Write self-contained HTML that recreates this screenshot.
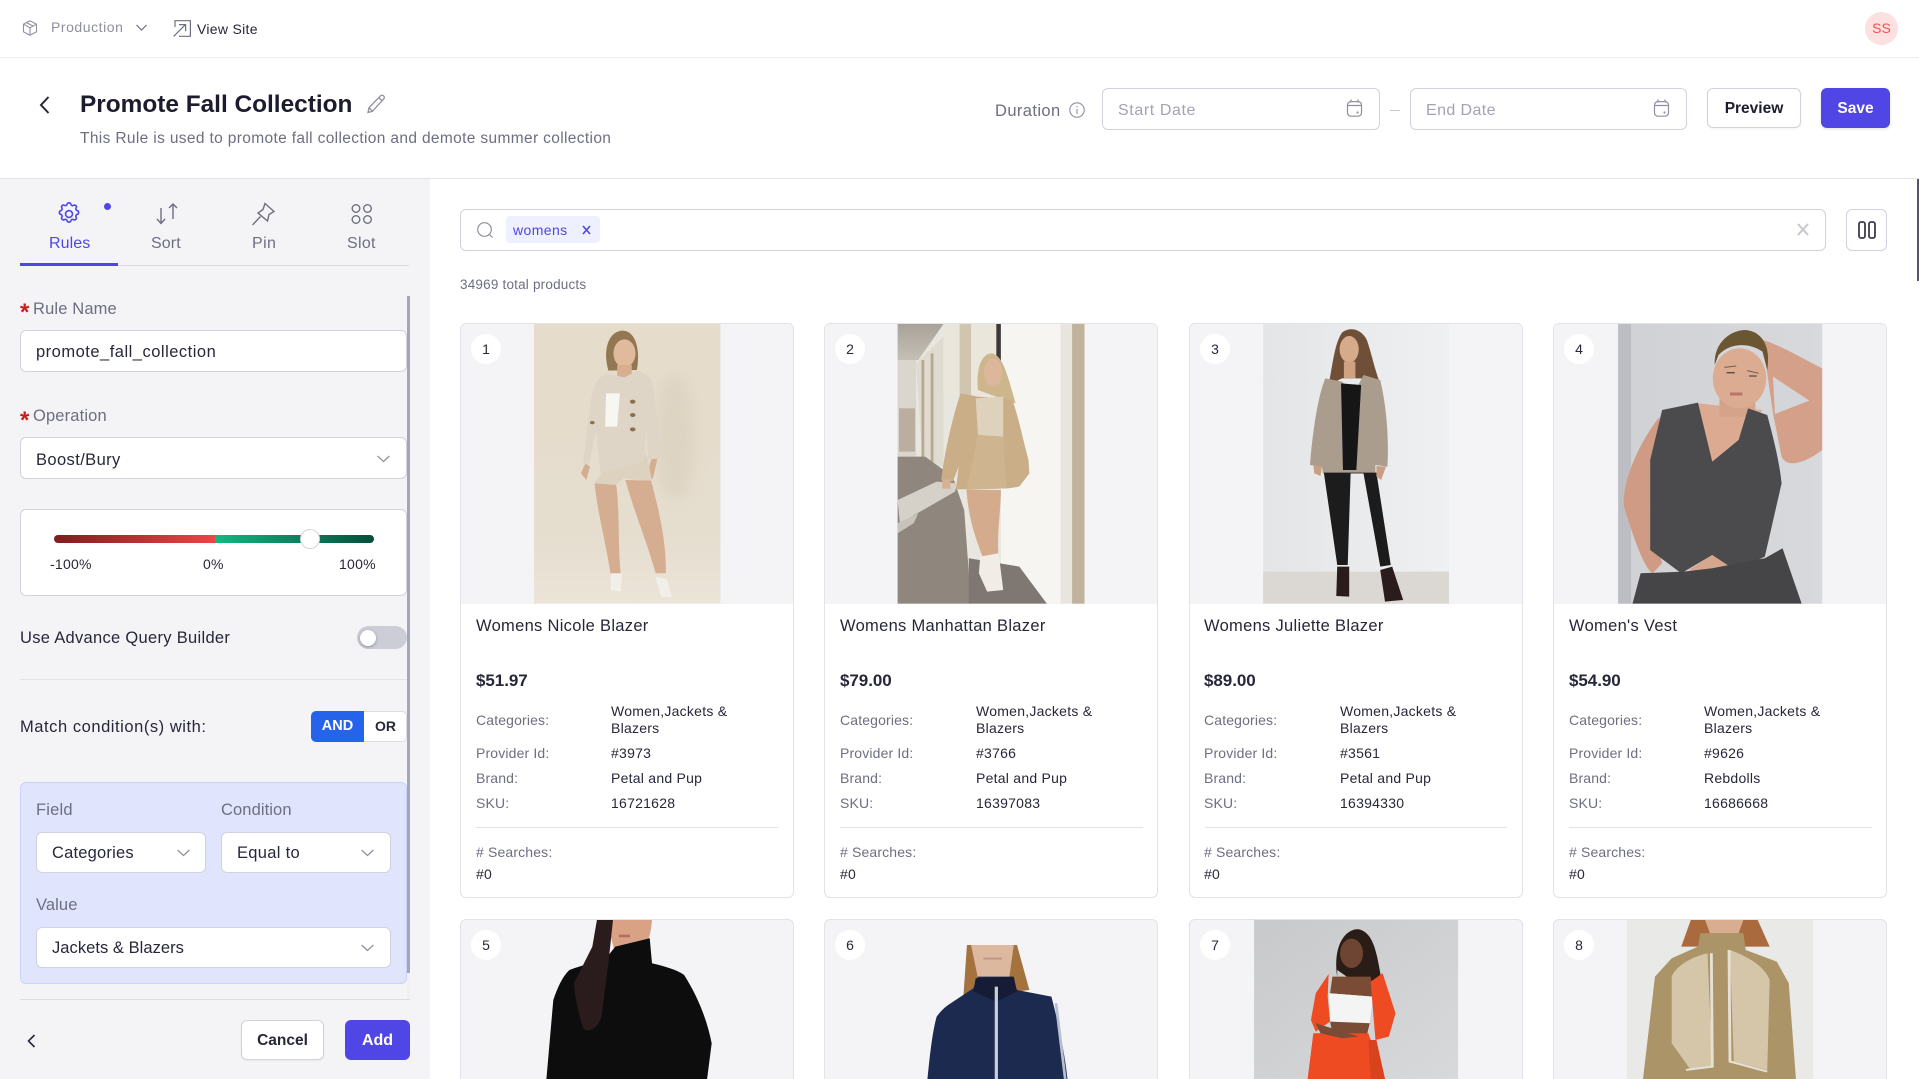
<!DOCTYPE html>
<html lang="en"><head><meta charset="utf-8"><title>Promote Fall Collection</title>
<style>
*{box-sizing:border-box}
html,body{margin:0;padding:0;width:1919px;height:1079px;overflow:hidden;background:#fff}
body{position:relative;font-family:"Liberation Sans","Noto Sans CJK SC",sans-serif;color:#27273a;font-size:16px}
.a{position:absolute}
.t{position:absolute;white-space:nowrap;line-height:20px;height:20px;margin-top:1px}
.l{color:#6e6e82}
.box{position:absolute;background:#fff;border:1px solid #d2d2de;border-radius:6px}
.card{position:absolute;top:323px;width:334px;height:575px;background:#fff;border:1px solid #e2e2e9;border-radius:6px}
.card2{position:absolute;top:919px;width:334px;height:200px;background:#f4f4f7;border:1px solid #e2e2e9;border-radius:6px}
.img{position:absolute;left:0;top:0;width:332px;height:280px;background:#f4f4f7;border-radius:5px 5px 0 0}
.badge{position:absolute;width:30px;height:30px;border-radius:50%;background:#fff;text-align:center;line-height:30px;font-size:14px;color:#27273a;z-index:5}
.s14{font-size:14px;letter-spacing:.25px;margin-top:0}
.s14.l{letter-spacing:.15px}
.m{font-size:16.5px;letter-spacing:.3px}
.p{font-size:17px;font-weight:700;letter-spacing:-.05px}
svg{position:absolute;overflow:visible}
.hr{position:absolute;height:1px;background:#e2e2e8}
</style></head><body>

<div class="hr" style="left:0;top:57px;width:1919px;background:#ececf1"></div>
<svg style="left:22px;top:20px" width="16" height="16" viewBox="0 0 16 16" fill="none" stroke="#8f8f9f" stroke-width="1.1"><path d="M8 .8l6.5 3.4v7.6L8 15.2 1.5 11.8V4.2zM1.5 4.2L8 7.8l6.5-3.6M8 7.8v7.4M4.6 2.6l6.6 3.6"/></svg>
<div class="t s14" style="left:51px;top:17px;color:#8f8f9f;letter-spacing:.55px">Production</div>
<svg style="left:136px;top:24px" width="11" height="8" fill="none" stroke="#6e6e82" stroke-width="1.2"><path d="M.5 1l5 5 5-5"/></svg>
<svg style="left:173px;top:20px" width="18" height="17" fill="none" stroke="#6e6e82" stroke-width="1.2"><path d="M2 7V.7h15.4v15.6H6M.6 16.4L12.5 4.6M6 4.6h6.6v6.6"/></svg>
<div class="t s14" style="left:197px;top:19px;color:#27273a;letter-spacing:.3px">View Site</div>
<div class="a" style="left:1865px;top:12px;width:33px;height:33px;border-radius:50%;background:#fde0e0;color:#ef5350;font-size:14px;text-align:center;line-height:33px">SS</div>

<svg style="left:39px;top:96px" width="11" height="18" fill="none" stroke="#27273a" stroke-width="2"><path d="M9.5 1L2 9l7.5 8"/></svg>
<div class="t" style="left:80px;top:94px;font-size:24.4px;font-weight:700;color:#1c1c2e">Promote Fall Collection</div>
<svg style="left:366px;top:94px" width="20" height="20" viewBox="0 0 20 20" fill="none" stroke="#8f8f9f" stroke-width="1.3"><path d="M2 18.5l1-4.8L14.5 1.800c1-.9 2.600-.7 3.300.3.7 1 .6 2.200-.2 3L6.400 17.300zM3 13.700l3.400 3.600M12.800 3.600l3.400 3.400"/></svg>
<div class="t" style="left:80px;top:128px;font-size:15.5px;color:#6e6e82;letter-spacing:.35px">This Rule is used to promote fall collection and demote summer collection</div>

<div class="t" style="left:995px;top:100px;color:#6e6e82;font-size:16.5px;letter-spacing:.4px">Duration</div>
<svg style="left:1069px;top:102px" width="16" height="16" fill="none" stroke="#8f8f9f" stroke-width="1.1"><circle cx="8" cy="8" r="7.200"/><path d="M8 7v5M8 4v1.400"/></svg>
<div class="box" style="left:1102px;top:88px;width:278px;height:42px"></div>
<div class="t" style="left:1118px;top:100px;color:#a3a3b3;letter-spacing:.6px">Start Date</div>
<svg style="left:1346px;top:99px" width="17" height="18" fill="none" stroke="#8f8f9f" stroke-width="1.200"><rect x="1.500" y="2.600" width="14" height="14.600" rx="3.400"/><path d="M5 .4v3M12 .4v3M2 6.500h13"/><circle cx="11.500" cy="13.500" r=".5"/></svg>
<div class="a" style="left:1390px;top:110px;width:10px;height:1px;background:#c8c8d4"></div>
<div class="box" style="left:1410px;top:88px;width:277px;height:42px"></div>
<div class="t" style="left:1426px;top:100px;color:#a3a3b3;letter-spacing:.4px">End Date</div>
<svg style="left:1653px;top:99px" width="17" height="18" fill="none" stroke="#8f8f9f" stroke-width="1.200"><rect x="1.500" y="2.600" width="14" height="14.600" rx="3.400"/><path d="M5 .4v3M12 .4v3M2 6.500h13"/><circle cx="11.500" cy="13.500" r=".5"/></svg>
<div class="box" style="left:1707px;top:88px;width:94px;height:40px;text-align:center;line-height:40px;font-weight:700;color:#1c1c2e;font-size:15.5px;box-shadow:0 1px 2px rgba(0,0,0,.05)">Preview</div>
<div class="a" style="left:1821px;top:88px;width:69px;height:40px;background:#4f46e5;border-radius:6px;color:#fff;text-align:center;line-height:42px;font-weight:700;font-size:15.5px;box-shadow:0 1px 3px rgba(0,0,0,.12)">Save</div>
<div class="hr" style="left:0;top:178px;width:1919px;background:#e3e3ea"></div>

<!-- SIDEBAR -->
<div class="a" style="left:0;top:179px;width:430px;height:900px;background:#f4f4f7"></div>
<svg style="left:56px;top:201px" width="26" height="26" viewBox="0 0 24 24" fill="none" stroke="#4f46e5" stroke-width="1.5"><path d="M10.300 2.900c.4-1.600 2.900-1.600 3.400 0a1.700 1.700 0 0 0 2.600 1.100c1.500-.9 3.200.8 2.300 2.300a1.700 1.700 0 0 0 1.100 2.600c1.600.4 1.600 2.900 0 3.400a1.700 1.700 0 0 0-1.100 2.600c.9 1.500-.8 3.200-2.300 2.300a1.700 1.700 0 0 0-2.600 1.100c-.4 1.600-2.900 1.600-3.400 0a1.700 1.700 0 0 0-2.600-1.100c-1.500.9-3.200-.8-2.300-2.300a1.700 1.700 0 0 0-1.100-2.600c-1.600-.4-1.600-2.900 0-3.400a1.700 1.700 0 0 0 1.100-2.600c-.9-1.500.8-3.200 2.300-2.300 1 .6 2.300.1 2.600-1.100z"/><circle cx="12" cy="12" r="3.200"/></svg>
<div class="a" style="left:104px;top:203px;width:7px;height:7px;border-radius:50%;background:#4f46e5"></div>
<div class="t" style="left:49px;top:233px;color:#4f46e5;letter-spacing:.1px">Rules</div>
<svg style="left:156px;top:203px" width="22" height="21" fill="none" stroke="#6e6e82" stroke-width="1.4"><path d="M5 5v15M1 16l4 4.500L9 16M17 16V1M13 5l4-4 4 4"/></svg>
<div class="t" style="left:151px;top:233px;color:#6e6e82;letter-spacing:.1px">Sort</div>
<svg style="left:251px;top:202px" width="24" height="24" viewBox="0 0 24 24" fill="none" stroke="#6e6e82" stroke-width="1.400"><path d="M14 1.500l9 8-5 3-1.500 6.500L7 11l5-3.500zM9.500 14.500L1.500 23"/></svg>
<div class="t" style="left:252px;top:233px;color:#6e6e82;letter-spacing:.4px">Pin</div>
<svg style="left:351px;top:203px" width="22" height="22" fill="none" stroke="#6e6e82" stroke-width="1.400"><circle cx="5" cy="5.500" r="3.800"/><circle cx="16.500" cy="5.500" r="3.800"/><circle cx="5" cy="16.500" r="3.800"/><circle cx="16.500" cy="16.500" r="3.800"/></svg>
<div class="t" style="left:347px;top:233px;color:#6e6e82;letter-spacing:.3px">Slot</div>
<div class="a" style="left:20px;top:265px;width:389px;height:1px;background:#dcdce3"></div>
<div class="a" style="left:20px;top:263px;width:98px;height:3px;background:#4f46e5"></div>

<div class="a" style="left:407px;top:296px;width:3px;height:677px;background:#a5a5b9"></div>
<div class="a" style="left:407px;top:973px;width:3px;height:26px;background:#f0f0f3"></div>

<div class="t" style="left:20px;top:302px;color:#c81e1e;font-size:24px;font-weight:700">*</div>
<div class="t l" style="left:33px;top:298px;font-size:16.5px;letter-spacing:.15px">Rule Name</div>
<div class="box" style="left:20px;top:330px;width:387px;height:42px"></div>
<div class="t m" style="left:36px;top:341px;letter-spacing:.5px">promote_fall_collection</div>

<div class="t" style="left:20px;top:410px;color:#c81e1e;font-size:24px;font-weight:700">*</div>
<div class="t l" style="left:33px;top:405px;font-size:16.5px;letter-spacing:.15px">Operation</div>
<div class="box" style="left:20px;top:437px;width:387px;height:42px"></div>
<div class="t m" style="left:36px;top:449px;letter-spacing:.4px">Boost/Bury</div>
<svg style="left:377px;top:455px" width="13" height="8" fill="none" stroke="#8f8f9f" stroke-width="1.200"><path d="M.6 1l5.900 5.500L12.400 1"/></svg>

<div class="box" style="left:20px;top:509px;width:387px;height:87px"></div>
<div class="a" style="left:54px;top:535px;width:161px;height:8px;border-radius:4px 0 0 4px;background:linear-gradient(90deg,#7f1d1d,#ef4444)"></div>
<div class="a" style="left:215px;top:535px;width:159px;height:8px;border-radius:0 4px 4px 0;background:linear-gradient(90deg,#10b981,#064e3b)"></div>
<div class="a" style="left:300px;top:529px;width:20px;height:20px;border-radius:50%;background:#fff;border:1px solid #d4d4de"></div>
<div class="t s14" style="left:50px;top:554px">-100%</div>
<div class="t s14" style="left:203px;top:554px">0%</div>
<div class="t s14" style="left:339px;top:554px">100%</div>

<div class="t m" style="left:20px;top:627px">Use Advance Query Builder</div>
<div class="a" style="left:357px;top:626px;width:50px;height:23px;border-radius:12px;background:#cdcdd8"></div>
<div class="a" style="left:360px;top:630px;width:16px;height:16px;border-radius:50%;background:#fff;box-shadow:0 1px 3px rgba(0,0,0,.3)"></div>
<div class="hr" style="left:20px;top:679px;width:387px"></div>

<div class="t m" style="left:20px;top:716px;letter-spacing:.55px">Match condition(s) with:</div>
<div class="a" style="left:311px;top:711px;width:96px;height:31px;border-radius:5px;border:1px solid #dcdce3;background:#fff;overflow:hidden"></div>
<div class="a" style="left:311px;top:711px;width:53px;height:31px;border-radius:5px 0 0 5px;background:#2563eb;color:#fff;text-align:center;line-height:31px;font-weight:700;font-size:14.500px">AND</div>
<div class="a" style="left:364px;top:711px;width:43px;height:31px;text-align:center;line-height:31px;font-weight:700;font-size:14px;color:#27273a">OR</div>

<div class="a" style="left:20px;top:782px;width:387px;height:202px;background:#e0e5fd;border:1px solid #c7d2fe;border-radius:6px"></div>
<div class="t l" style="left:36px;top:799px;font-size:16.5px;letter-spacing:.2px">Field</div>
<div class="t l" style="left:221px;top:799px;font-size:16.5px;letter-spacing:.1px">Condition</div>
<div class="box" style="left:36px;top:832px;width:170px;height:41px"></div>
<div class="t" style="left:52px;top:842px;font-size:16.5px;letter-spacing:.2px">Categories</div>
<svg style="left:177px;top:849px" width="13" height="8" fill="none" stroke="#8f8f9f" stroke-width="1.200"><path d="M.6 1l5.900 5.500L12.400 1"/></svg>
<div class="box" style="left:221px;top:832px;width:170px;height:41px"></div>
<div class="t" style="left:237px;top:842px;font-size:16.5px;letter-spacing:.3px">Equal to</div>
<svg style="left:361px;top:849px" width="13" height="8" fill="none" stroke="#8f8f9f" stroke-width="1.200"><path d="M.6 1l5.900 5.500L12.400 1"/></svg>
<div class="t l" style="left:36px;top:894px;font-size:16.5px;letter-spacing:.1px">Value</div>
<div class="box" style="left:36px;top:927px;width:355px;height:41px"></div>
<div class="t" style="left:52px;top:937px;font-size:16.5px;letter-spacing:.05px">Jackets &amp; Blazers</div>
<svg style="left:361px;top:944px" width="13" height="8" fill="none" stroke="#8f8f9f" stroke-width="1.200"><path d="M.6 1l5.900 5.500L12.400 1"/></svg>

<div class="a" style="left:20px;top:990px;width:390px;height:9px;overflow:hidden"><div class="t" style="left:36px;top:6px;letter-spacing:.4px">Add condition</div></div>
<div class="a" style="left:20px;top:999px;width:390px;height:1px;background:#dcdce3"></div>
<svg style="left:27px;top:1034px" width="9" height="14" fill="none" stroke="#27273a" stroke-width="1.600"><path d="M7.500 1L1.500 7l6 6"/></svg>
<div class="box" style="left:241px;top:1020px;width:83px;height:40px;text-align:center;line-height:40px;font-weight:700;font-size:15.500px;color:#27273a;box-shadow:0 1px 2px rgba(0,0,0,.05)">Cancel</div>
<div class="a" style="left:345px;top:1020px;width:65px;height:40px;background:#4f46e5;border-radius:6px;color:#fff;text-align:center;line-height:42px;font-weight:700;font-size:16px">Add</div>

<!-- SEARCH -->
<div class="box" style="left:460px;top:209px;width:1366px;height:42px"></div>
<svg style="left:476px;top:221px" width="18" height="18" fill="none" stroke="#8f8f9f" stroke-width="1.200"><circle cx="8.500" cy="8.500" r="6.800"/><path d="M13.500 13.500L16.500 16.500"/></svg>
<div class="a" style="left:506px;top:216px;width:94px;height:27px;background:#eef0fe;border-radius:4px"></div>
<div class="t s14" style="left:513px;top:220px;color:#4f46e5;letter-spacing:.4px">womens</div>
<svg style="left:582px;top:225px" width="9" height="10" fill="none" stroke="#4f46e5" stroke-width="1.600"><path d="M1 1l7 8M8 1L1 9"/></svg>
<svg style="left:1797px;top:223px" width="12" height="13" fill="none" stroke="#c6c6cc" stroke-width="2"><path d="M1 1l10 11M11 1L1 12"/></svg>
<div class="box" style="left:1846px;top:209px;width:41px;height:42px"></div>
<svg style="left:1858px;top:221px" width="18" height="18" fill="none" stroke="#3c3c50" stroke-width="1.800"><rect x="1" y="1" width="6" height="16" rx="2"/><rect x="11" y="1" width="6" height="16" rx="2"/></svg>
<div class="t s14" style="left:460px;top:275px;color:#6e6e82;font-size:13.500px;letter-spacing:.2px">34969 total products</div>

<div class="a" style="left:1917px;top:179px;width:2px;height:102px;background:#55556a"></div>

<!-- CARDS ROW 1 -->
<div class="card" style="left:460px"><div class="img"></div></div>
<div class="card" style="left:824px"><div class="img"></div></div>
<div class="card" style="left:1189px"><div class="img"></div></div>
<div class="card" style="left:1553px"><div class="img"></div></div>
<div class="card2" style="left:460px"></div>
<div class="card2" style="left:824px"></div>
<div class="card2" style="left:1189px"></div>
<div class="card2" style="left:1553px"></div>

<!-- PRODUCT IMAGES -->
<svg style="left:0;top:0;overflow:hidden" width="1919" height="1079" viewBox="0 0 1919 1079">
<defs>
<linearGradient id="g1" x1="0" y1="0" x2="0" y2="1"><stop offset="0" stop-color="#e6dccb"/><stop offset=".75" stop-color="#e5ddce"/><stop offset="1" stop-color="#ebe4d8"/></linearGradient>
<linearGradient id="g3" x1="0" y1="0" x2="1" y2="0"><stop offset="0" stop-color="#e4e5e6"/><stop offset="1" stop-color="#eef0f1"/></linearGradient>
<linearGradient id="g4" x1="0" y1="0" x2="1" y2="0"><stop offset="0" stop-color="#d0d1d5"/><stop offset="1" stop-color="#d8d9dd"/></linearGradient>
<linearGradient id="g7" x1="0" y1="0" x2="1" y2="1"><stop offset="0" stop-color="#c8c9cb"/><stop offset="1" stop-color="#d8d9da"/></linearGradient>
<linearGradient id="gc" x1="0" y1="0" x2="0" y2="1"><stop offset="0" stop-color="#a8a298"/><stop offset="1" stop-color="#c5c0b6"/></linearGradient>
<filter id="b" x="-5%" y="-5%" width="110%" height="110%"><feGaussianBlur stdDeviation=".7"/></filter>
<filter id="b2" x="-60%" y="-60%" width="220%" height="220%"><feGaussianBlur stdDeviation="16"/></filter>
</defs>

<!-- Card 1 -->
<g transform="translate(450,310) scale(.4591,.3333)"><g filter="url(#b)">
<rect x="183" y="42" width="406" height="839" fill="url(#g1)"/>
<ellipse cx="490" cy="380" rx="40" ry="190" fill="#d6ccba" opacity=".55" filter="url(#b2)"/>
<path d="M345 182C332 120 345 65 375 62C405 62 415 120 407 180Z" fill="#937753"/>
<ellipse cx="380" cy="130" rx="24" ry="42" fill="#e0ba9c"/>
<path d="M364 165H396V210H364Z" fill="#d8ae8f"/>
<path d="M295 460L285 490L297 510L305 470Z" fill="#d5ae91"/>
<path d="M440 440L425 515L442 505L452 445Z" fill="#d5ae91"/>
<path d="M330 350C332 400 338 450 338 475L315 520C330 526 350 526 362 525L378 505L440 515L430 440L362 350Z" fill="#ddd1bf"/>
<path d="M315 520C320 600 340 700 350 795L372 795C365 700 370 600 362 525Z" fill="#d5ae91"/>
<path d="M382 510C400 600 430 700 448 790L470 790C472 700 455 600 438 512Z" fill="#d5ae91"/>
<path d="M340 190C322 205 312 220 306 280C300 340 295 410 290 460L302 465L310 420L318 360L328 490L360 478L422 455L428 360L432 448L460 445C458 380 452 320 446 270C444 240 442 215 436 203L410 180L380 202Z" fill="#dfd5c7"/>
<path d="M340 250L370 250L364 350L338 350Z" fill="#f8f6f1"/>
<path d="M350 790L375 790L372 845L350 840Z" fill="#f2eee8"/>
<path d="M447 800L472 808L484 860L460 862Z" fill="#f2eee8"/>
<g fill="#8c6f4e"><circle cx="398" cy="275" r="6"/><circle cx="398" cy="315" r="6"/><circle cx="398" cy="358" r="6"/><circle cx="310" cy="338" r="5"/></g>
</g></g>

<!-- Card 2 -->
<g transform="translate(450,310) scale(.4591,.3333)"><g filter="url(#b)">
<rect x="975" y="42" width="407" height="839" fill="#e9e6df"/>
<path d="M975 42H1075L1020 150H975Z" fill="url(#gc)"/>
<rect x="975" y="150" width="40" height="290" fill="#dad6ce"/>
<rect x="978" y="295" width="35" height="130" fill="#b9ae9f"/>
<path d="M1015 160L1075 80V470H1030Z" fill="#e0dbd0"/>
<path d="M1030 150V460M1050 130V470" stroke="#b5a990" stroke-width="6" fill="none"/>
<path d="M1075 42H1190V250H1075Z" fill="#ebe6dc"/>
<path d="M1110 42H1135V300H1110Z" fill="#d0c5b0"/>
<rect x="1190" y="42" width="10" height="170" fill="#3a3836"/>
<rect x="1200" y="42" width="155" height="839" fill="#f6f5f2"/>
<rect x="1330" y="42" width="25" height="839" fill="#e8e5df"/>
<rect x="1355" y="42" width="27" height="839" fill="#c0b29b"/>
<path d="M975 440H1035L1095 500L1120 600L1135 881H975Z" fill="#8f867d"/>
<path d="M1060 515L1105 520L1100 545L980 640L975 570Z" fill="#d5d1c8"/>
<path d="M975 640L1020 610L1010 640L975 670Z" fill="#c8c3ba"/>
<path d="M1130 745L1240 770L1300 881H1130Z" fill="#7f7771"/>
<path d="M1150 240C1145 170 1160 130 1180 130C1205 135 1215 200 1232 280L1200 265Z" fill="#cdb68b"/>
<ellipse cx="1183" cy="188" rx="20" ry="42" fill="#dcb79c"/>
<path d="M1125 540C1130 640 1150 700 1160 740L1195 740C1190 680 1200 600 1200 540Z" fill="#d5ab8e"/>
<path d="M1112 250C1095 320 1078 420 1070 510L1095 515L1108 470L1102 538L1215 535L1240 530L1262 490L1260 450C1250 400 1240 330 1225 270L1200 265L1150 260Z" fill="#c9ae87"/>
<path d="M1145 265L1205 260L1205 380L1150 375Z" fill="#dfd2bc"/>
<path d="M1150 375L1205 380L1212 535L1125 540Z" fill="#cfb58f"/>
<path d="M1155 740L1195 730L1205 840L1170 845L1152 790Z" fill="#f1ede6"/>
<rect x="1072" y="508" width="18" height="28" fill="#d8b094"/>
</g></g>

<!-- Card 3 -->
<g transform="translate(1170,310) scale(.4778,.3333)"><g filter="url(#b)">
<rect x="195" y="42" width="389" height="839" fill="url(#g3)"/>
<rect x="195" y="785" width="389" height="96" fill="#dbd8d3"/>
<path d="M332 225C342 150 345 100 360 68C375 50 400 55 412 90C422 130 428 180 442 228L400 205L360 205Z" fill="#6f5039"/>
<ellipse cx="375" cy="118" rx="20" ry="40" fill="#d6ab8b"/>
<rect x="364" y="155" width="24" height="50" fill="#cfa283"/>
<path d="M325 205C312 250 300 340 293 465L318 470L320 490L430 490L430 465L455 470C458 400 455 300 440 210L405 195L385 250L360 215Z" fill="#aa9d8e"/>
<path d="M358 220L400 225L390 480L362 480Z" fill="#151515"/>
<path d="M322 488L350 765L372 765L378 490L405 490L440 770L462 765L432 488Z" fill="#1c1c1c"/>
<path d="M300 465L318 470L315 498L302 490Z" fill="#c99f84"/>
<path d="M432 468L452 470L442 510L432 500Z" fill="#c99f84"/>
<path d="M350 770L375 770L375 860L348 858Z" fill="#2a1f1c"/>
<path d="M440 780L465 770L488 870L450 875Z" fill="#2a1f1c"/>
</g></g>

<!-- Card 4 -->
<g transform="translate(1170,310) scale(.4778,.3333)"><g filter="url(#b)">
<rect x="938" y="42" width="427" height="839" fill="url(#g4)"/>
<rect x="938" y="42" width="27" height="839" fill="#bdbec3"/>
<path d="M1025 320C980 400 945 520 950 590C970 680 990 770 1010 790L1030 760L1005 600Z" fill="#d09b84"/>
<path d="M1240 90C1270 100 1330 150 1365 175V420C1330 460 1290 475 1280 440L1262 310L1250 190Z" fill="#d5a08a"/>
<path d="M1262 200L1338 272L1266 312Z" fill="#d4d5d9"/>
<path d="M1105 280L1240 300L1170 430L1135 455Z" fill="#dcaa91"/>
<path d="M1150 250H1225V320H1150Z" fill="#d5a28a"/>
<ellipse cx="1192" cy="205" rx="56" ry="90" fill="#dbab92"/>
<path d="M1140 165C1138 95 1175 60 1205 60C1240 65 1258 110 1250 180L1240 125C1210 95 1170 100 1148 135Z" fill="#6a5633"/>
<path d="M1160 172L1185 168M1208 182L1232 190" stroke="#7a5a48" stroke-width="3" fill="none"/>
<path d="M1165 188H1182M1212 198H1228" stroke="#5a4a48" stroke-width="4" fill="none"/>
<path d="M1172 252H1198" stroke="#b87468" stroke-width="9" fill="none"/>
<path d="M1030 300L1105 278L1135 455L1190 390L1210 295L1250 315C1262 380 1275 450 1280 520L1245 740L1180 785L1135 735L1070 790L1005 720L1005 450Z" fill="#4b4b4d"/>
<path d="M1085 780L1135 735L1170 768C1140 780 1110 785 1085 780Z" fill="#d6a68d"/>
<path d="M985 790L1075 785L1135 775L1245 745L1282 715L1322 881H968Z" fill="#454547"/>
</g></g>

<!-- Card 5 -->
<g transform="translate(450,600) scale(.4591,.3333)"><g filter="url(#b)">
<path d="M340 960H440C438 1000 430 1040 415 1060H360Z" fill="#d9a285"/>
<path d="M368 1008H392" stroke="#b56c62" stroke-width="8" fill="none"/>
<path d="M360 1040L435 1015L440 1090C470 1100 495 1110 510 1125C540 1190 560 1260 570 1330L560 1437H210L225 1200C235 1160 245 1130 260 1110C290 1095 320 1085 340 1075Z" fill="#0e0e10"/>
<path d="M320 960H355L345 1090L330 1250C320 1290 300 1300 290 1285C280 1240 272 1190 270 1150L310 1040Z" fill="#2a1f1b"/>
</g></g>

<!-- Card 6 -->
<g transform="translate(450,600) scale(.4591,.3333)"><g filter="url(#b)">
<path d="M1126 1035H1235L1262 1170L1118 1195Z" fill="#a4723e"/>
<path d="M1135 1035H1228L1218 1135L1150 1135Z" fill="#dcb89f"/>
<path d="M1162 1076H1202" stroke="#bc9a8a" stroke-width="6" fill="none"/>
<path d="M1140 1165L1150 1130L1225 1130L1235 1170L1310 1190C1325 1270 1338 1350 1345 1437H1040C1045 1370 1050 1300 1060 1250C1068 1235 1075 1225 1085 1215Z" fill="#1c2b50"/>
<path d="M1145 1135L1228 1130L1235 1175L1190 1205L1140 1175Z" fill="#131d36"/>
<path d="M1190 1160V1437" stroke="#c8cfdc" stroke-width="7" fill="none"/>
<path d="M1320 1210L1340 1437" stroke="#b8c0d0" stroke-width="6" fill="none"/>
</g></g>

<!-- Card 7 -->
<g transform="translate(1170,600) scale(.4778,.3333)"><g filter="url(#b)">
<rect x="176" y="960" width="427" height="477" fill="url(#g7)"/>
<path d="M350 1130C340 1030 370 985 395 988C430 1000 435 1070 450 1210L410 1170L350 1110Z" fill="#2c1e18"/>
<ellipse cx="380" cy="1060" rx="24" ry="44" fill="#6e4532"/>
<path d="M340 1130L420 1130L425 1190L335 1180Z" fill="#7a4c36"/>
<path d="M333 1180L425 1190L418 1270L335 1265Z" fill="#f4f4f4"/>
<path d="M335 1265L418 1270L412 1305L340 1300Z" fill="#7a4c36"/>
<path d="M332 1122L305 1180L295 1260L305 1295L335 1265L330 1190Z" fill="#ee4b22"/>
<path d="M420 1145L445 1120L472 1240L458 1310L430 1320Z" fill="#ee4b22"/>
<path d="M300 1300L415 1300L450 1437H288Z" fill="#ee4b22"/>
<path d="M415 1320H432L450 1437H420Z" fill="#d8431e"/>
<path d="M305 1270L395 1310L360 1315L315 1300Z" fill="#7a4c36"/>
</g></g>

<!-- Card 8 -->
<g transform="translate(1170,600) scale(.4778,.3333)"><g filter="url(#b)">
<rect x="956" y="960" width="390" height="477" fill="#e9e9e7"/>
<path d="M1090 960H1230L1255 1040H1070Z" fill="#a96b3c"/>
<path d="M1120 960H1200L1190 1000L1130 1000Z" fill="#d9ae90"/>
<path d="M1110 1000H1200L1205 1050L1270 1085L1295 1150L1310 1437H990L1015 1130L1050 1075L1105 1040Z" fill="#ab9468"/>
<path d="M1125 1060C1095 1070 1060 1095 1050 1130L1050 1330L1090 1410L1135 1400Z" fill="#d6c6a9"/>
<path d="M1172 1050C1210 1070 1245 1100 1255 1140L1250 1410L1180 1385Z" fill="#d6c6a9"/>
<path d="M1133 1060L1135 1400L1080 1410M1170 1050L1172 1385L1250 1415" fill="none" stroke="#e6e1d6" stroke-width="6"/>
</g></g>
</svg>

<!-- BADGES -->
<div class="badge" style="left:471px;top:334px">1</div>
<div class="badge" style="left:835px;top:334px">2</div>
<div class="badge" style="left:1200px;top:334px">3</div>
<div class="badge" style="left:1564px;top:334px">4</div>
<div class="badge" style="left:471px;top:930px">5</div>
<div class="badge" style="left:835px;top:930px">6</div>
<div class="badge" style="left:1200px;top:930px">7</div>
<div class="badge" style="left:1564px;top:930px">8</div>

<!-- CARD 1 TEXT -->
<div class="t m" style="left:476px;top:615px">Womens Nicole Blazer</div>
<div class="t p" style="left:476px;top:670px">$51.97</div>
<div class="t s14 l" style="left:476px;top:710px">Categories:</div>
<div class="t s14" style="left:611px;top:701px">Women,Jackets &amp;</div>
<div class="t s14" style="left:611px;top:718px">Blazers</div>
<div class="t s14 l" style="left:476px;top:743px">Provider Id:</div><div class="t s14" style="left:611px;top:743px">#3973</div>
<div class="t s14 l" style="left:476px;top:768px">Brand:</div><div class="t s14" style="left:611px;top:768px">Petal and Pup</div>
<div class="t s14 l" style="left:476px;top:793px">SKU:</div><div class="t s14" style="left:611px;top:793px">16721628</div>
<div class="hr" style="left:476px;top:827px;width:302px"></div>
<div class="t s14 l" style="left:476px;top:842px"># Searches:</div>
<div class="t s14" style="left:476px;top:864px">#0</div>

<!-- CARD 2 TEXT -->
<div class="t m" style="left:840px;top:615px">Womens Manhattan Blazer</div>
<div class="t p" style="left:840px;top:670px">$79.00</div>
<div class="t s14 l" style="left:840px;top:710px">Categories:</div>
<div class="t s14" style="left:976px;top:701px">Women,Jackets &amp;</div>
<div class="t s14" style="left:976px;top:718px">Blazers</div>
<div class="t s14 l" style="left:840px;top:743px">Provider Id:</div><div class="t s14" style="left:976px;top:743px">#3766</div>
<div class="t s14 l" style="left:840px;top:768px">Brand:</div><div class="t s14" style="left:976px;top:768px">Petal and Pup</div>
<div class="t s14 l" style="left:840px;top:793px">SKU:</div><div class="t s14" style="left:976px;top:793px">16397083</div>
<div class="hr" style="left:840px;top:827px;width:303px"></div>
<div class="t s14 l" style="left:840px;top:842px"># Searches:</div>
<div class="t s14" style="left:840px;top:864px">#0</div>

<!-- CARD 3 TEXT -->
<div class="t m" style="left:1204px;top:615px">Womens Juliette Blazer</div>
<div class="t p" style="left:1204px;top:670px">$89.00</div>
<div class="t s14 l" style="left:1204px;top:710px">Categories:</div>
<div class="t s14" style="left:1340px;top:701px">Women,Jackets &amp;</div>
<div class="t s14" style="left:1340px;top:718px">Blazers</div>
<div class="t s14 l" style="left:1204px;top:743px">Provider Id:</div><div class="t s14" style="left:1340px;top:743px">#3561</div>
<div class="t s14 l" style="left:1204px;top:768px">Brand:</div><div class="t s14" style="left:1340px;top:768px">Petal and Pup</div>
<div class="t s14 l" style="left:1204px;top:793px">SKU:</div><div class="t s14" style="left:1340px;top:793px">16394330</div>
<div class="hr" style="left:1205px;top:827px;width:302px"></div>
<div class="t s14 l" style="left:1204px;top:842px"># Searches:</div>
<div class="t s14" style="left:1204px;top:864px">#0</div>

<!-- CARD 4 TEXT -->
<div class="t m" style="left:1569px;top:615px">Women's Vest</div>
<div class="t p" style="left:1569px;top:670px">$54.90</div>
<div class="t s14 l" style="left:1569px;top:710px">Categories:</div>
<div class="t s14" style="left:1704px;top:701px">Women,Jackets &amp;</div>
<div class="t s14" style="left:1704px;top:718px">Blazers</div>
<div class="t s14 l" style="left:1569px;top:743px">Provider Id:</div><div class="t s14" style="left:1704px;top:743px">#9626</div>
<div class="t s14 l" style="left:1569px;top:768px">Brand:</div><div class="t s14" style="left:1704px;top:768px">Rebdolls</div>
<div class="t s14 l" style="left:1569px;top:793px">SKU:</div><div class="t s14" style="left:1704px;top:793px">16686668</div>
<div class="hr" style="left:1569px;top:827px;width:303px"></div>
<div class="t s14 l" style="left:1569px;top:842px"># Searches:</div>
<div class="t s14" style="left:1569px;top:864px">#0</div>

</body></html>
